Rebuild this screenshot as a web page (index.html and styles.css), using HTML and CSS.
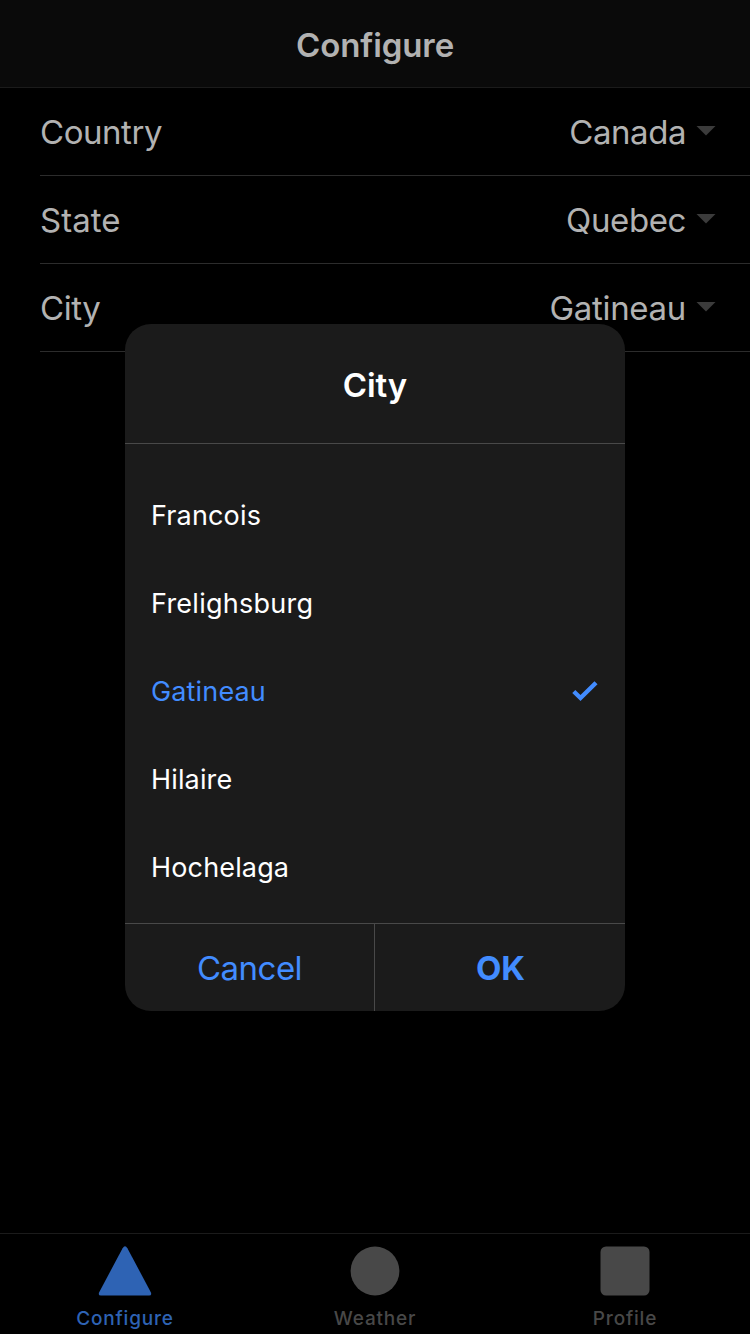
FILE: index.html
```html
<!DOCTYPE html>
<html lang="en">
<head>
<meta charset="utf-8">
<title>Configure</title>
<link rel="stylesheet" href="styles.css">
</head>
<body>
<div class="app">
  <header class="header"><h1 class="header-title">Configure</h1></header>
  <main class="content">
    <div class="item"><span class="label">Country</span><span class="value">Canada</span><i class="arrow"></i></div>
    <div class="item"><span class="label label-state">State</span><span class="value value-quebec">Quebec</span><i class="arrow"></i></div>
    <div class="item"><span class="label">City</span><span class="value value-gatineau">Gatineau</span><i class="arrow"></i></div>
  </main>
  <nav class="tabs">
    <a class="tab tab-active">
      <svg class="tab-icon" viewBox="0 0 60 52"><path d="M27.6 3.2Q30 -.6 32.4 3.2L55.8 47.2Q57.200 50.500 54 50.500H6Q2.800 50.500 4.200 47.200Z"/></svg>
      <span>Configure</span>
    </a>
    <a class="tab">
      <svg class="tab-icon" viewBox="0 0 60 52"><circle cx="30" cy="26" r="24.400"/></svg>
      <span>Weather</span>
    </a>
    <a class="tab">
      <svg class="tab-icon" viewBox="0 0 60 52"><rect x="5.500" y="1.500" width="49" height="49" rx="5.500"/></svg>
      <span>Profile</span>
    </a>
  </nav>
  <div class="overlay">
    <section class="alert">
      <h2 class="alert-title">City</h2>
      <div class="options">
        <div class="option"><span>Francois</span></div>
        <div class="option option-long"><span>Frelighsburg</span></div>
        <div class="option option-selected"><span>Gatineau</span>
          <svg class="check" viewBox="0 0 28 24"><path d="M2.800 11.500L9.500 18L25 2.700"/></svg>
        </div>
        <div class="option"><span>Hilaire</span></div>
        <div class="option"><span>Hochelaga</span></div>
      </div>
      <div class="actions">
        <button class="action cancel">Cancel</button>
        <button class="action ok">OK</button>
      </div>
    </section>
  </div>
</div>
</body>
</html>
```
FILE: styles.css
```css
* { box-sizing: border-box; }
body { margin: 0; background: #000; font-family: Inter, "Liberation Sans", sans-serif; }
.app { position: relative; width: 750px; height: 1334px; display: flex; flex-direction: column; overflow: hidden; color: #b2b2b2; }
.header { height: 88px; display: flex; align-items: center; justify-content: center; background: #0a0a0a; border-bottom: 1px solid #1b1b1b; padding-top: 2px; }
.header-title { margin: 0; font-size: 33px; font-weight: 600; letter-spacing: -0.100px; }
.content { flex: 1; }
.item { height: 88px; margin-left: 40px; padding: 0 34px 0 0; border-bottom: 1px solid #2c2c2c; display: flex; align-items: center; font-size: 33px; letter-spacing: -0.450px; }
.label-state { letter-spacing: 0; }
.value { margin-left: auto; }
.value-quebec { letter-spacing: -0.400px; }
.value-gatineau { letter-spacing: -0.320px; }
.arrow { width: 20px; height: 10px; margin: -2px 0 0 10px; background: #3b3b3b; clip-path: polygon(0 0, 100% 0, 50% 100%); }
.tabs { height: 101px; display: flex; border-top: 1px solid #1b1b1b; }
.tab { flex: 1; display: flex; flex-direction: column; align-items: center; padding-top: 11px; color: #484848; font-size: 19px; font-weight: 500; line-height: 24px; letter-spacing: 0.800px; }
.tab-active { color: #2e63b4; }
.tab-icon { width: 60px; height: 52px; fill: currentColor; margin-bottom: 10px; }
.overlay { position: absolute; inset: 0; display: flex; align-items: center; justify-content: center; }
.alert { width: 500px; height: 687px; border-radius: 26px; overflow: hidden; background: #1b1b1b; color: #fff; display: flex; flex-direction: column; }
.alert-title { margin: 0; height: 120px; border-bottom: 1px solid #494949; display: flex; align-items: center; justify-content: center; padding-top: 3px; font-size: 33px; font-weight: 600; letter-spacing: -0.100px; }
.options { height: 479px; padding: 28px 26px 0; }
.option { height: 88px; display: flex; align-items: center; justify-content: space-between; font-size: 27px; letter-spacing: 0.150px; }
.option-long { letter-spacing: 0.250px; }
.option-selected { color: #428cff; }
.check { width: 28px; height: 24px; fill: none; stroke: currentColor; stroke-width: 4.400; }
.actions { flex: 1; display: flex; border-top: 1px solid #494949; }
.action { margin: 0; padding: 2px 0 0; border: 0; background: none; color: #428cff; font: 400 33px Inter, "Liberation Sans", sans-serif; letter-spacing: -0.500px; }
.cancel { width: 250px; border-right: 1px solid #494949; }
.ok { width: 250px; padding-left: 1px; font-weight: 700; letter-spacing: 0; }
```
